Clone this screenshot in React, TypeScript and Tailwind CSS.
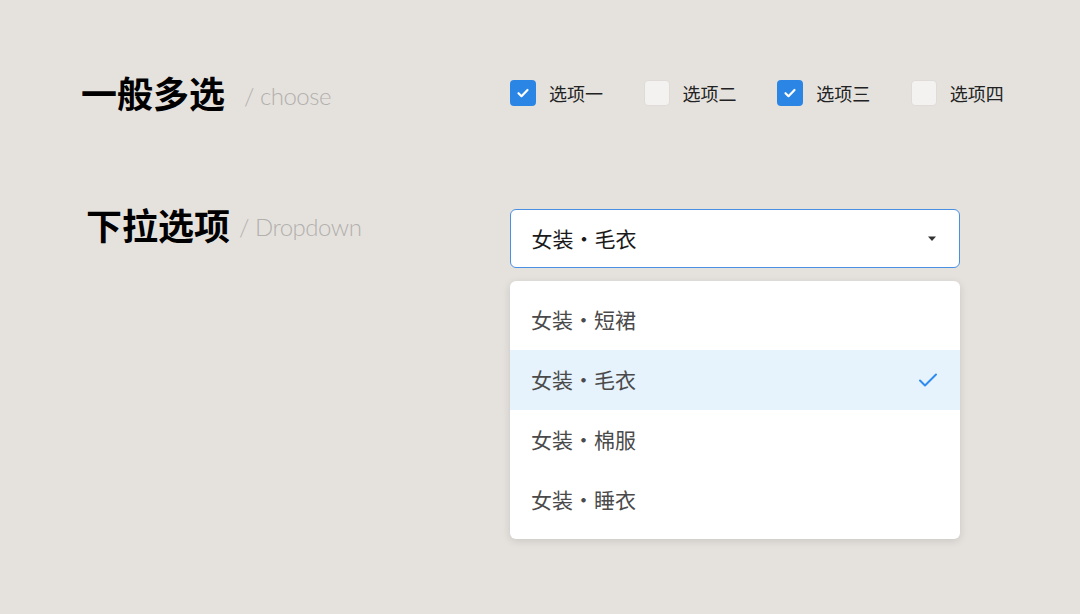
import React from "react";

const cjk = { fontFamily: '"Noto Sans CJK SC", "Noto Sans", sans-serif' };
const latin = { fontFamily: 'Lato, "Open Sans", sans-serif' };

function Check({ checked, label }: { checked: boolean; label: string }) {
  return (
    <div className="flex items-center w-[133.6px]">
      <div
        className={
          checked
            ? "w-[26px] h-[26px] rounded-[4px] bg-[#2b85e4] flex items-center justify-center"
            : "w-[26px] h-[26px] rounded-[4px] bg-[#f3f2f1] border border-[#dedbd8]"
        }
      >
        {checked && (
          <svg width="16" height="16" viewBox="0 0 16 16" fill="none">
            <path d="M3.5 8.2l3 3L12.5 5" stroke="#fff" strokeWidth="2.2" strokeLinecap="round" strokeLinejoin="round" />
          </svg>
        )}
      </div>
      <span className="ml-[13px] text-[18px] text-[#222] leading-none" style={cjk}>
        {label}
      </span>
    </div>
  );
}

export default function App() {
  const items = ["女装・短裙", "女装・毛衣", "女装・棉服", "女装・睡衣"];
  return (
    <div className="w-[1080px] h-[614px] bg-[#e5e2de] relative overflow-hidden">
      <div className="absolute left-[81px] top-[70px] flex items-center">
        <span className="text-[36px] font-bold text-black leading-none" style={cjk}>
          一般多选
        </span>
        <span className="ml-[19px] mt-[8px] text-[24px] font-light text-[#b2b0ad] tracking-[-0.5px]" style={latin}>
          / choose
        </span>
      </div>
      <div className="absolute left-[510px] top-[80px] flex">
        <Check checked label="选项一" />
        <Check checked={false} label="选项二" />
        <Check checked label="选项三" />
        <Check checked={false} label="选项四" />
      </div>

      <div className="absolute left-[86px] top-[203px] flex items-center">
        <span className="text-[36px] font-bold text-black leading-none" style={cjk}>
          下拉选项
        </span>
        <span className="ml-[9px] mt-[6px] text-[24px] font-light text-[#b2b0ad] tracking-[-0.5px]" style={latin}>
          / Dropdown
        </span>
      </div>

      <div className="absolute left-[510px] top-[209px] w-[450px]">
        <div className="h-[59px] bg-white border-[1.5px] border-[#4a90e2] rounded-[6px] flex items-center justify-between pl-[20.5px] pr-[22px]">
          <span className="text-[21px] text-[#1a1a1a]" style={cjk}>
            女装・毛衣
          </span>
          <svg width="10" height="6" viewBox="0 0 10 6">
            <path d="M1 0.5h8L5 5z" fill="#333" />
          </svg>
        </div>
        <div className="mt-[13px] bg-white rounded-[6px] py-[9px] shadow-[0_2px_8px_rgba(0,0,0,0.12)]">
          {items.map((t, i) => (
            <div
              key={t}
              className={
                "h-[60px] flex items-center justify-between pl-[21px] pr-[22px] " +
                (i === 1 ? "bg-[#e6f2fc]" : "")
              }
            >
              <span className="text-[21px] text-[#4a4a4a]" style={cjk}>
                {t}
              </span>
              {i === 1 && (
                <svg width="20" height="16" viewBox="0 0 20 16" fill="none">
                  <path d="M2 8.5l5 5L18 2.5" stroke="#2d8cf0" strokeWidth="2" strokeLinecap="round" strokeLinejoin="round" />
                </svg>
              )}
            </div>
          ))}
        </div>
      </div>
    </div>
  );
}
